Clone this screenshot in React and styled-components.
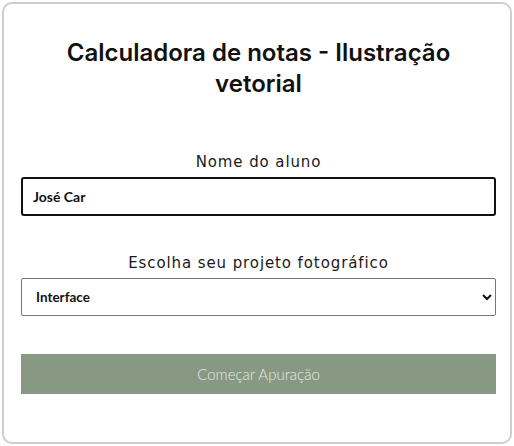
import React from 'react'
import styled, { createGlobalStyle } from 'styled-components'

const Global = createGlobalStyle`
  body {
    margin: 0;
    background: #fff;
    font-family: "Lato", sans-serif;
  }
`

const Card = styled.div`
  margin: 2px;
  height: 438px;
  border: 2px solid #cfcfcf;
  border-radius: 10px;
  padding: 0 14px 0 17px;
  display: flex;
  flex-direction: column;
`

const Title = styled.h1`
  margin: 33px 0 0;
  padding: 0 30px;
  font-family: "Inter", sans-serif;
  font-size: 24px;
  line-height: 31px;
  font-weight: 600;
  text-align: center;
  color: #111;
`

const Field = styled.div`
  display: flex;
  flex-direction: column;
  margin-top: ${p => p.top}px;
`

const Label = styled.label`
  font-family: "DejaVu Sans", sans-serif;
  font-size: 15px;
  letter-spacing: 0.9px;
  text-align: center;
  color: #1a1a1a;
  margin-bottom: 6px;
`

const TextInput = styled.input`
  box-sizing: border-box;
  height: 39px;
  border: 2px solid #111;
  border-radius: 3px;
  padding: 0 10px;
  font-family: "Lato", sans-serif;
  font-weight: 700;
  font-size: 14px;
  color: #111;
  outline: none;
`

const Select = styled.select`
  box-sizing: border-box;
  height: 38px;
  border: 1px solid #767676;
  border-radius: 2px;
  padding: 0 10px;
  font-family: "Lato", sans-serif;
  font-weight: 700;
  font-size: 13.5px;
  color: #111;
  background: #fff;
`

const Button = styled.button`
  margin-top: 38px;
  height: 40px;
  border: none;
  background: #879883;
  color: #e4eae1;
  font-family: "Lato", sans-serif;
  font-weight: 300;
  font-size: 15px;
`

export default function App() {
  return (
    <>
      <Global />
      <Card>
        <Title>Calculadora de notas - Ilustração vetorial</Title>
        <Field top={54}>
          <Label>Nome do aluno</Label>
          <TextInput defaultValue="José Car" />
        </Field>
        <Field top={38}>
          <Label>Escolha seu projeto fotográfico</Label>
          <Select defaultValue="Interface">
            <option>Interface</option>
            <option>Ilustração vetorial</option>
          </Select>
        </Field>
        <Button>Começar Apuração</Button>
      </Card>
    </>
  )
}
